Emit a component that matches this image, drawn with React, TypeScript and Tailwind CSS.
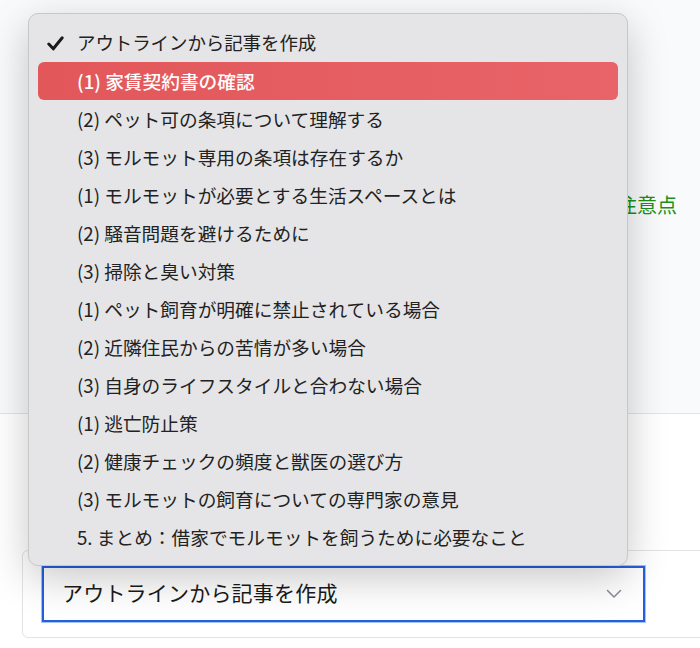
const items = [
  "(1) 家賃契約書の確認",
  "(2) ペット可の条項について理解する",
  "(3) モルモット専用の条項は存在するか",
  "(1) モルモットが必要とする生活スペースとは",
  "(2) 騒音問題を避けるために",
  "(3) 掃除と臭い対策",
  "(1) ペット飼育が明確に禁止されている場合",
  "(2) 近隣住民からの苦情が多い場合",
  "(3) 自身のライフスタイルと合わない場合",
  "(1) 逃亡防止策",
  "(2) 健康チェックの頻度と獣医の選び方",
  "(3) モルモットの飼育についての専門家の意見",
  "5. まとめ：借家でモルモットを飼うために必要なこと",
];

function Check() {
  return (
    <svg width="17" height="15" viewBox="0 0 17 15" className="text-[#1a1a1a]">
      <path d="M1.8 8 L6.3 12.8 L15.2 1.8" fill="none" stroke="currentColor" strokeWidth="3" strokeLinecap="round" strokeLinejoin="round" />
    </svg>
  );
}

function Chevron() {
  return (
    <svg width="16" height="10" viewBox="0 0 16 10" className="text-[#8a8a98]">
      <path d="M1.5 1.5 L8 8 L14.5 1.5" fill="none" stroke="currentColor" strokeWidth="1.5" strokeLinecap="round" strokeLinejoin="round" />
    </svg>
  );
}

export default function App() {
  return (
    <div className="relative h-[648px] w-[700px] overflow-hidden bg-white font-['Noto_Sans_CJK_JP','Noto_Sans',sans-serif]">
      <div className="h-[414px] border-b border-[#e2e3e5] bg-[#f9fafb] pt-[191px] pr-[23px] text-right">
        <span className="text-[20px] leading-[28px] text-[#1b911b]">飼育上の注意点</span>
      </div>

      <div className="pt-[136px] pl-[22px]">
        <div className="h-[88px] w-[720px] rounded-md border border-[#e2e3e5] bg-white pl-[19px] pt-[15px]">
          <div className="flex h-[56px] w-[603px] items-center justify-between border-2 border-[#2360e0] pl-[18px] pr-[21px] shadow-[0_0_0_1px_#a9c2f5]">
            <span className="pb-[3px] text-[21px] leading-none tracking-[0.2px] text-[#1a1a1a]">アウトラインから記事を作成</span>
            <Chevron />
          </div>
        </div>
      </div>

      <div className="absolute left-[28px] top-[13px] w-[600px] rounded-[10px] border border-[#c8c8ca] bg-[#e5e5e7] px-[9px] pt-[10px] pb-[9px] shadow-[0_12px_40px_rgba(0,0,0,0.22)]">
        <div className="flex h-[38px] items-center text-[18.5px] text-[#222]">
          <div className="flex w-[39px] justify-start pl-[9px]">
            <Check />
          </div>
          <span className="tracking-[-0.1px]">アウトラインから記事を作成</span>
        </div>
        {items.map((t, i) => (
          <div
            key={i}
            className={
              i === 0
                ? "flex h-[38px] items-center rounded-[6px] bg-gradient-to-r from-[#e2575a] to-[#e86468] pl-[39px] text-[18.7px] font-medium text-white"
                : "flex h-[38px] items-center pl-[39px] text-[18.7px] text-[#222]"
            }
          >
            {t}
          </div>
        ))}
      </div>
    </div>
  );
}
